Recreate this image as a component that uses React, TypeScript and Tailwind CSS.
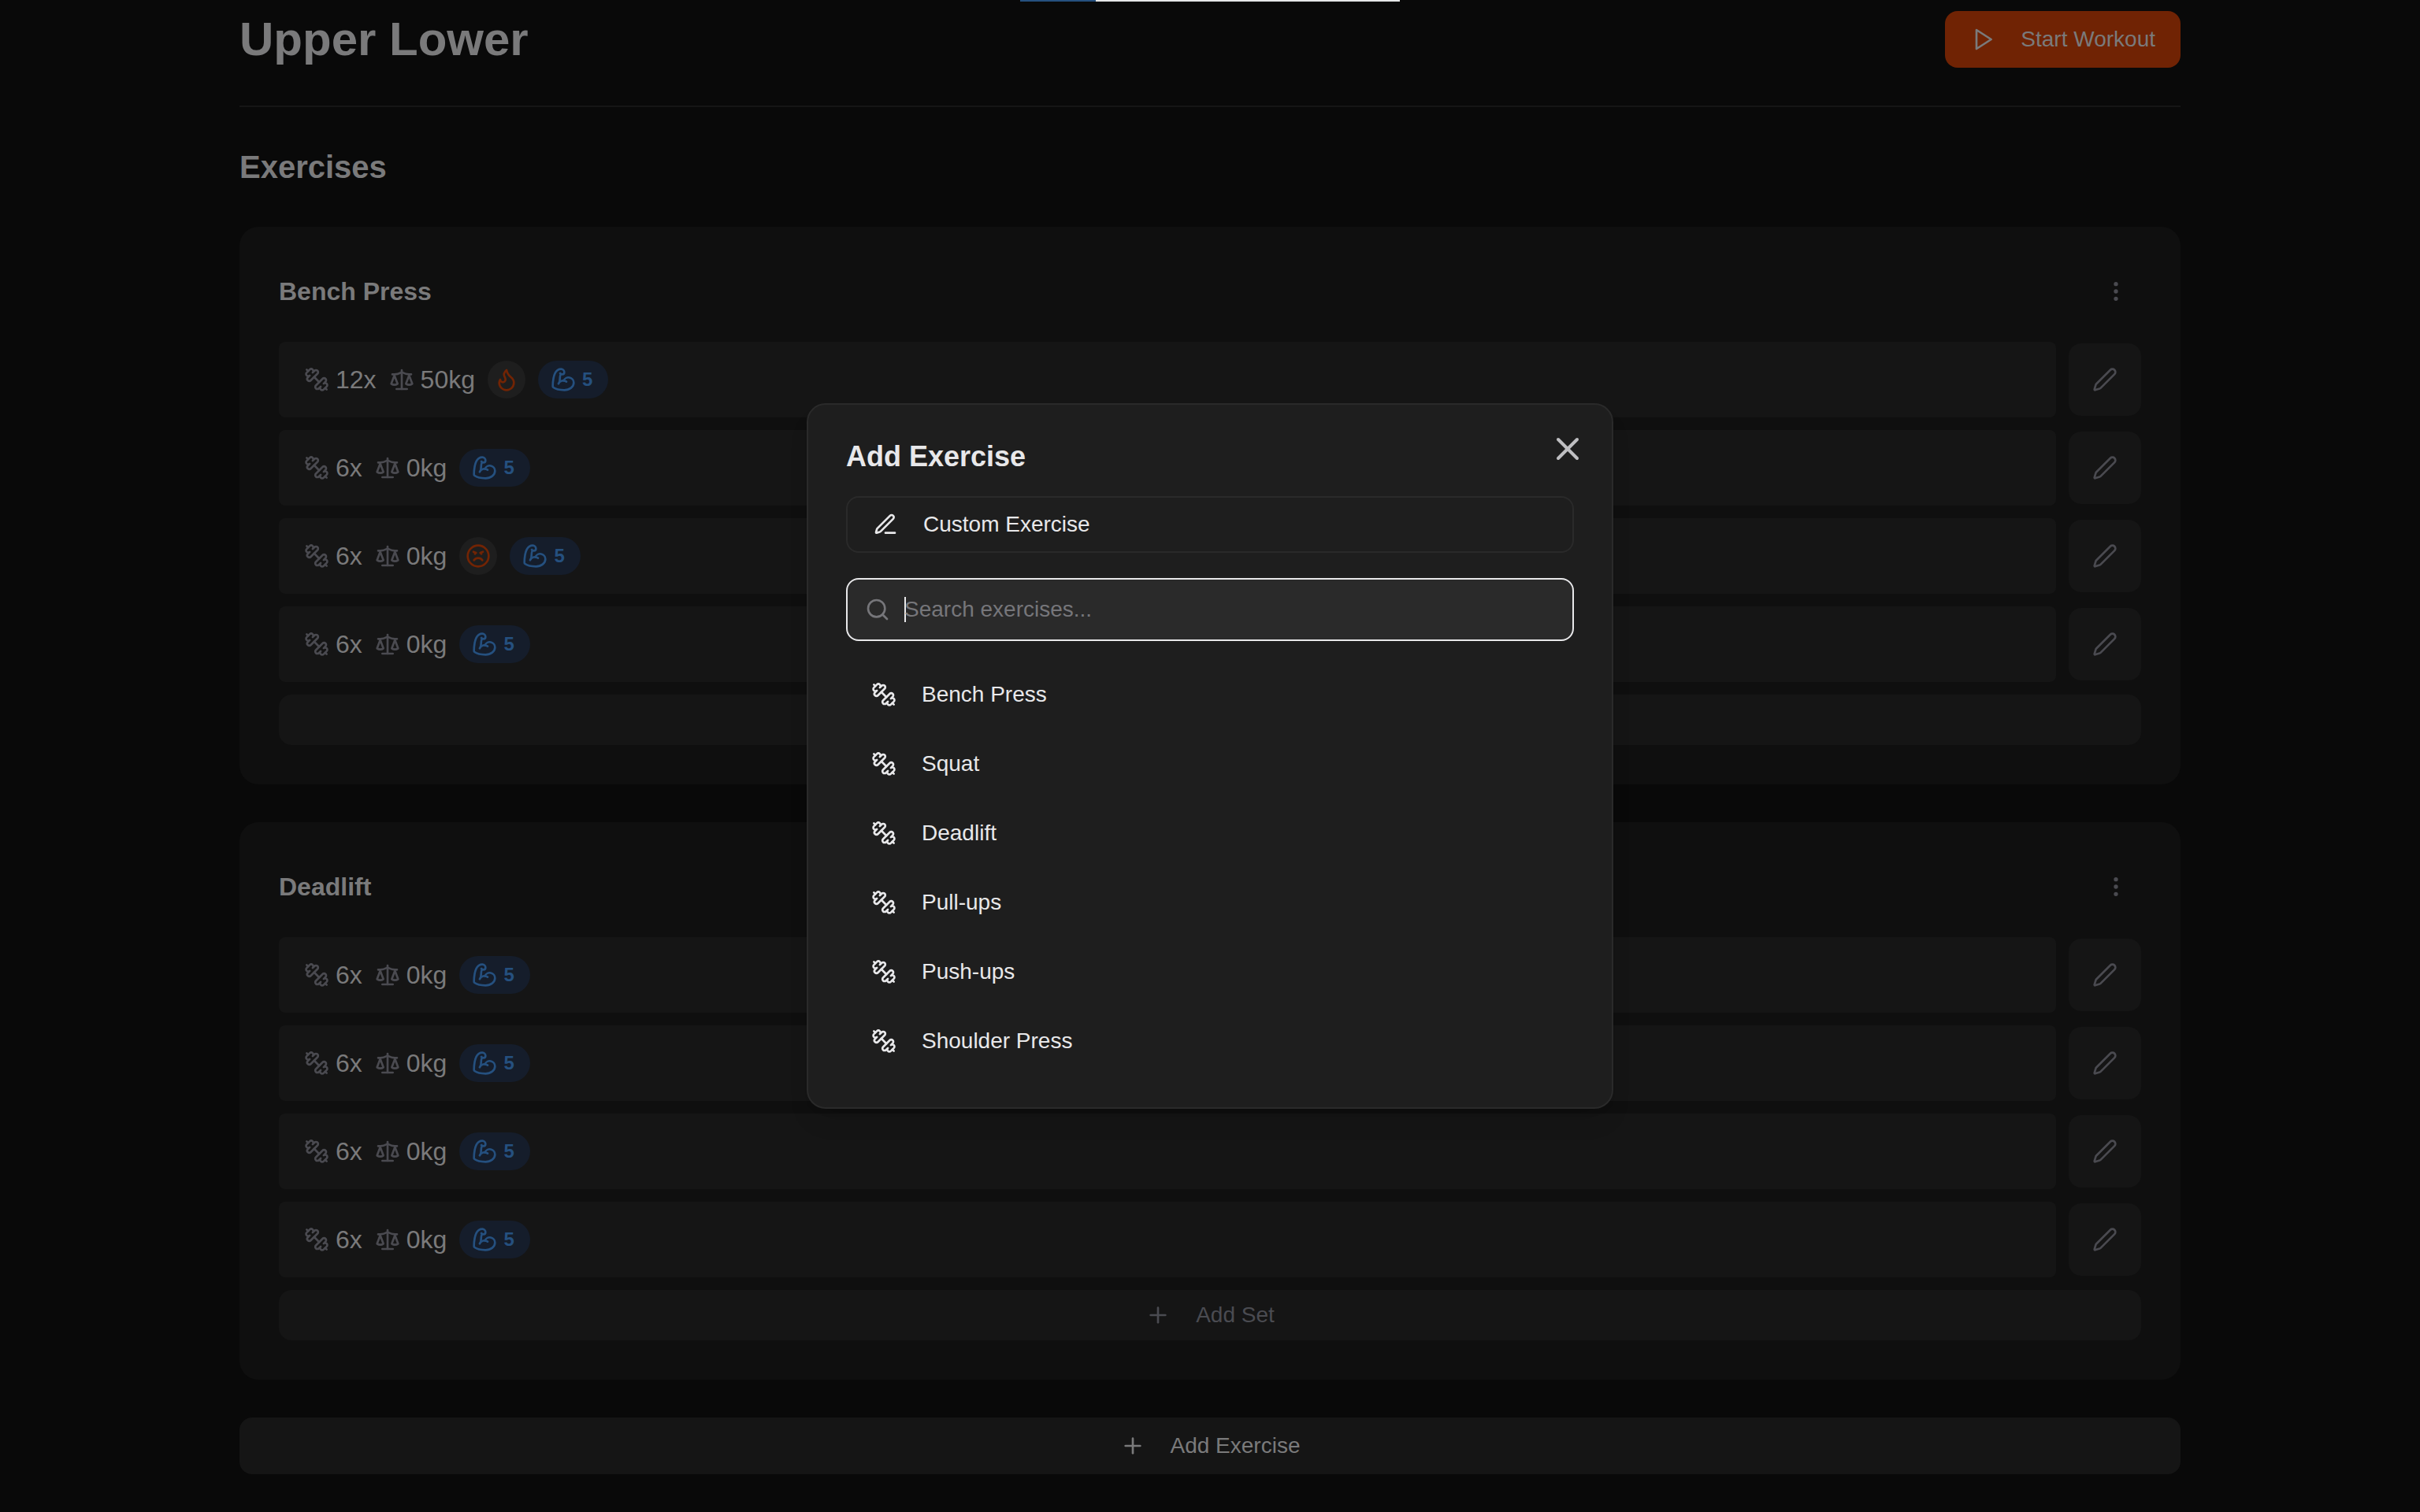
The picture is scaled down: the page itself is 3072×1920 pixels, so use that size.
import type { ReactNode } from "react";
import { Angry, BicepsFlexed, EllipsisVertical, Pen, Plus, Search, X } from "lucide-react";

type WorkoutSet = {
  reps: number;
  weight: number;
  kind?: "warmup" | "failure";
  effort: number;
};

const workout: { name: string; sets: WorkoutSet[] }[] = [
  {
    name: "Bench Press",
    sets: [
      { reps: 12, weight: 50, kind: "warmup", effort: 5 },
      { reps: 6, weight: 0, effort: 5 },
      { reps: 6, weight: 0, kind: "failure", effort: 5 },
      { reps: 6, weight: 0, effort: 5 },
    ],
  },
  {
    name: "Deadlift",
    sets: [
      { reps: 6, weight: 0, effort: 5 },
      { reps: 6, weight: 0, effort: 5 },
      { reps: 6, weight: 0, effort: 5 },
      { reps: 6, weight: 0, effort: 5 },
    ],
  },
];

const library = ["Bench Press", "Squat", "Deadlift", "Pull-ups", "Push-ups", "Shoulder Press"];

const icons = {
  play: ["M6 3 20 12 6 21Z"],
  dumbbell: [
    "M14.4 14.4 9.6 9.6",
    "M18.657 21.485a2 2 0 1 1-2.829-2.828l-1.767 1.768a2 2 0 1 1-2.829-2.829l6.364-6.364a2 2 0 1 1 2.829 2.829l-1.768 1.767a2 2 0 1 1 2.828 2.829z",
    "m21.5 21.5-1.4-1.4",
    "M3.9 3.9 2.5 2.5",
    "M6.404 12.768a2 2 0 1 1-2.829-2.829l1.768-1.767a2 2 0 1 1-2.828-2.829l2.828-2.828a2 2 0 1 1 2.829 2.828l1.767-1.768a2 2 0 1 1 2.829 2.829z",
  ],
  scale: [
    "m16 16 3-8 3 8c-.87.65-1.92 1-3 1s-2.13-.35-3-1Z",
    "m2 16 3-8 3 8c-.87.65-1.92 1-3 1s-2.13-.35-3-1Z",
    "M7 21h10",
    "M12 3v18",
    "M3 7h2c2 0 5-1 7-2 2 1 5 2 7 2h2",
  ],
  flame: [
    "M8.5 14.5A2.5 2.5 0 0 0 11 12c0-1.38-.5-2-1-3-1.072-2.143-.224-4.054 2-6 .5 2.5 2 4.9 4 6.5 2 1.6 3 3.5 3 5.5a7 7 0 1 1-14 0c0-1.153.433-2.294 1-3a2.5 2.5 0 0 0 2.5 2.5z",
  ],
  penLine: [
    "M12 20h9",
    "M16.376 3.622a1 1 0 0 1 3.002 3.002L7.368 18.635a2 2 0 0 1-.855.506l-2.872.838a.5.5 0 0 1-.62-.62l.838-2.872a2 2 0 0 1 .506-.854z",
  ],
};

function Icon({ name, className = "" }: { name: keyof typeof icons; className?: string }) {
  return (
    <svg
      viewBox="0 0 24 24"
      fill="none"
      stroke="currentColor"
      strokeWidth="2"
      strokeLinecap="round"
      strokeLinejoin="round"
      className={`size-8 shrink-0 ${className}`}
    >
      {icons[name].map((d) => (
        <path key={d} d={d} />
      ))}
    </svg>
  );
}

function KindBadge({ children }: { children: ReactNode }) {
  return (
    <span className="flex size-12 items-center justify-center rounded-full bg-[#1e1e1e] text-[#722404]">
      {children}
    </span>
  );
}

function SetRow({ set }: { set: WorkoutSet }) {
  return (
    <div className="flex items-center gap-4">
      <div className="flex h-24 flex-1 items-center gap-4 rounded-lg bg-[#151515] px-8 text-[32px] leading-12 text-[#7a7a7b]">
        <span className="flex items-center gap-2">
          <Icon name="dumbbell" className="text-[#4a4a50]" />
          {set.reps}x
        </span>
        <span className="flex items-center gap-2">
          <Icon name="scale" className="text-[#4a4a50]" />
          {set.weight}kg
        </span>
        {set.kind === "warmup" && (
          <KindBadge>
            <Icon name="flame" />
          </KindBadge>
        )}
        {set.kind === "failure" && (
          <KindBadge>
            <Angry className="size-8" />
          </KindBadge>
        )}
        <span className="flex h-12 items-center gap-2 rounded-full bg-[#151d2b] pr-5 pl-4 text-2xl font-bold text-[#25507f]">
          <BicepsFlexed className="size-8" />
          {set.effort}
        </span>
      </div>
      <button className="flex size-23 items-center justify-center rounded-2xl bg-[#151515] text-[#4a4a50]">
        <Pen className="size-8" />
      </button>
    </div>
  );
}

function AddExerciseDialog() {
  return (
    <div className="absolute top-[512px] left-1/2 flex w-5xl -translate-x-1/2 flex-col gap-8 rounded-3xl border-2 border-[#2a2a2a] bg-[#1e1e1e] p-12 text-[#e8e8ea] shadow-[0_20px_30px_-6px_rgba(0,0,0,0.1),0_8px_12px_-8px_rgba(0,0,0,0.1)]">
      <h2 className="text-4xl leading-9 font-bold">Add Exercise</h2>
      <button className="flex h-18 items-center gap-8 rounded-2xl border-2 border-[#2a2a2a] px-8 text-[28px]">
        <Icon name="penLine" />
        Custom Exercise
      </button>
      <div className="flex h-20 items-center rounded-2xl border-2 border-[#e8e8ea] bg-[#2a2a2a] pl-[22px] text-[28px] text-[#76767a]">
        <Search className="size-8" />
        <span className="ml-[18px] -mr-0.5 h-8 w-0.5 bg-[#e8e8ea]" />
        <span>Search exercises...</span>
      </div>
      <ul className="flex flex-col gap-4">
        {library.map((name) => (
          <li key={name} className="flex h-18 items-center gap-8 px-8 text-[28px]">
            <Icon name="dumbbell" />
            {name}
          </li>
        ))}
      </ul>
      <button className="absolute top-8 right-8 text-[#bfbfc2]">
        <X className="size-12" />
      </button>
    </div>
  );
}

export default function App() {
  return (
    <div className="relative h-[1920px] w-[3072px] overflow-hidden bg-[#090909] font-['Liberation_Sans',Arial,sans-serif] text-[#7a7a7b]">
      <main className="mx-auto w-[2464px] pt-3.5">
        <header className="flex items-center justify-between border-b-2 border-[#151515] pb-12">
          <h1 className="text-[60px] leading-18 font-bold">Upper Lower</h1>
          <button className="flex h-18 items-center gap-8 rounded-2xl bg-[#702304] px-8 text-[28px]">
            <Icon name="play" />
            Start Workout
          </button>
        </header>

        <section className="flex flex-col gap-12 pt-12">
          <h2 className="text-[40px] leading-14 font-bold">Exercises</h2>
          {workout.map((exercise) => (
            <article key={exercise.name} className="rounded-3xl bg-[#0f0f0f] p-[50px]">
              <div className="mb-8 flex h-16 items-center justify-between">
                <h3 className="text-[32px] font-bold">{exercise.name}</h3>
                <button className="flex size-16 items-center justify-center text-[#4a4a50]">
                  <EllipsisVertical className="size-8" />
                </button>
              </div>
              <div className="flex flex-col gap-4">
                {exercise.sets.map((set, i) => (
                  <SetRow key={i} set={set} />
                ))}
                <button className="flex h-16 items-center justify-center gap-8 rounded-2xl bg-[#151515] text-[28px] text-[#4a4b51]">
                  <Plus className="size-8" />
                  Add Set
                </button>
              </div>
            </article>
          ))}
          <button className="flex h-18 items-center justify-center gap-8 rounded-2xl bg-[#151515] text-[28px]">
            <Plus className="size-8" />
            Add Exercise
          </button>
        </section>
      </main>

      {/* page loading bar */}
      <div className="absolute top-0 left-[1295px] flex h-0.5 w-[482px] bg-[#e5e7e8]">
        <div className="w-24 bg-[#25507f]" />
      </div>

      <AddExerciseDialog />
    </div>
  );
}
